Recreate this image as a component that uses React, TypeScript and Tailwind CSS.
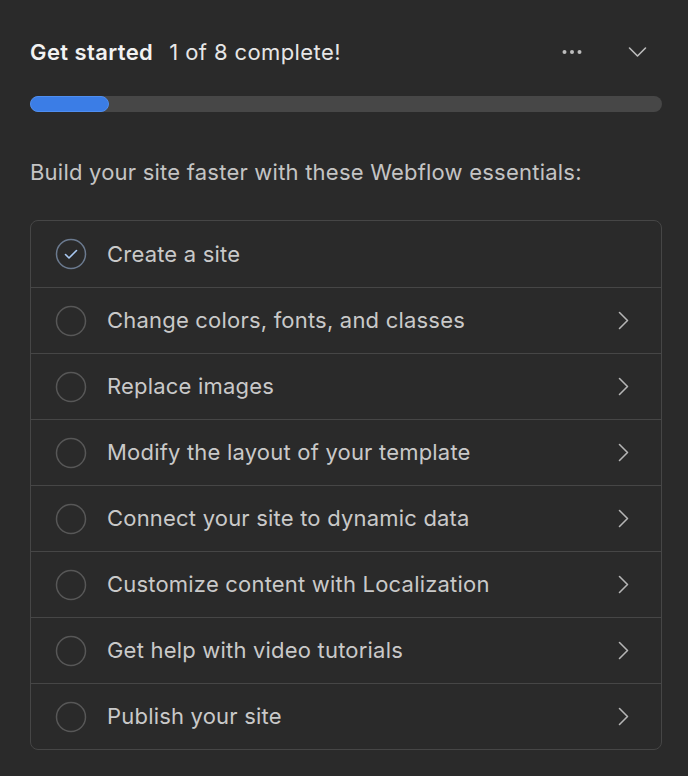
const STEPS = [
  { label: "Create a site", done: true },
  { label: "Change colors, fonts, and classes", done: false },
  { label: "Replace images", done: false },
  { label: "Modify the layout of your template", done: false },
  { label: "Connect your site to dynamic data", done: false },
  { label: "Customize content with Localization", done: false },
  { label: "Get help with video tutorials", done: false },
  { label: "Publish your site", done: false },
];

function StepIcon({ done }: { done: boolean }) {
  // checked circle gets a bluish stroke + tick
  if (done) {
    return (
      <svg width="32" height="32" viewBox="0 0 32 32" fill="none">
        <circle cx="16" cy="16" r="14.5" stroke="#6b7a8f" strokeWidth="1.5" />
        <path d="M10.5 16.5l3.5 3.5 7.5-7.5" stroke="#a9c9f2" strokeWidth="1.6" strokeLinecap="round" strokeLinejoin="round" />
      </svg>
    );
  }
  return (
    <svg width="32" height="32" viewBox="0 0 32 32" fill="none">
      <circle cx="16" cy="16" r="14.5" stroke="#575757" strokeWidth="1.5" />
    </svg>
  );
}

export default function App() {
  const completed = STEPS.filter((s) => s.done).length;

  return (
    <main className="min-h-screen bg-[#2a2a2a] pl-[30px] pr-[26px] pt-[36px] font-['Inter',sans-serif]">
      {/* header */}
      <header className="flex h-[32px] items-center">
        <h1 className="text-[22px] font-semibold tracking-[0.4px] text-[#f2f2f2]">Get started</h1>
        <span className="ml-[16px] text-[22px] tracking-[0.4px] text-[#e6e6e6]">
          {completed} of {STEPS.length} complete!
        </span>
        <div className="ml-auto flex items-center gap-[46px] pr-[15px]">
          {/* dots */}
          <svg width="20" height="6" viewBox="0 0 20 6" fill="#bdbdbd">
            <circle cx="2.5" cy="3" r="2" />
            <circle cx="10" cy="3" r="2" />
            <circle cx="17.5" cy="3" r="2" />
          </svg>
          <svg width="19" height="12" viewBox="0 0 19 12" fill="none">
            <path d="M1.5 2l8 8 8-8" stroke="#bdbdbd" strokeWidth="1.6" strokeLinecap="round" strokeLinejoin="round" />
          </svg>
        </div>
      </header>

      {/* progress */}
      <div className="mt-[28px] h-[16px] w-full rounded-full bg-[#474747]">
        <div className="h-full w-[79px] rounded-full border border-[#4f8ef0] bg-[#3b7de6]" />
      </div>

      <p className="mt-[44px] text-[22px] leading-[32px] tracking-[0.22px] text-[#c4c4c4]">
        Build your site faster with these Webflow essentials:
      </p>

      {/* checklist */}
      <ul className="mt-[32px] overflow-hidden rounded-[8px] border border-[#464646]">
        {STEPS.map((s, i) => (
          <li
            key={s.label}
            className={
              "flex h-[66px] items-center pl-[24px] pr-[32px] " + (i > 0 ? "border-t border-[#464646]" : "")
            }
          >
            <StepIcon done={s.done} />
            <span className="ml-[20px] text-[22px] tracking-[0.2px] text-[#c9c9c9]">{s.label}</span>
            {!s.done && (
              <svg width="11" height="19" viewBox="0 0 11 19" fill="none" className="ml-auto">
                <path d="M1.5 1.5l8 8-8 8" stroke="#b5b5b5" strokeWidth="1.6" strokeLinecap="round" strokeLinejoin="round" />
              </svg>
            )}
          </li>
        ))}
      </ul>
    </main>
  );
}
